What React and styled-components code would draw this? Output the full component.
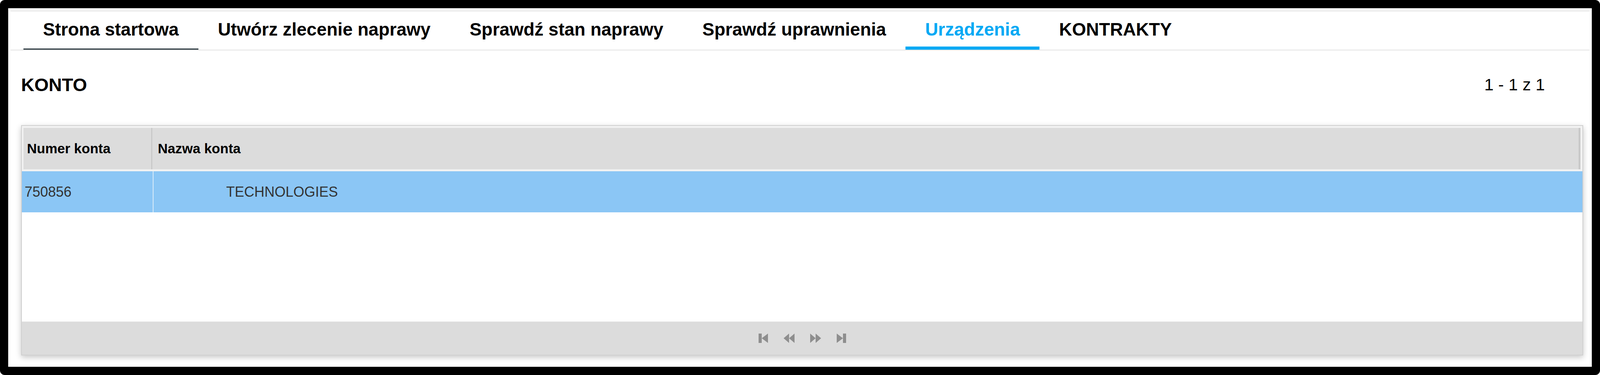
import React from "react";
import styled, { createGlobalStyle } from "styled-components";

const GlobalStyle = createGlobalStyle`
  html, body {
    margin: 0;
    padding: 0;
    background: #fff;
    overflow: hidden;
  }
  body {
    font-family: "Liberation Sans", Arial, sans-serif;
  }
`;

const tabs = [
  { label: "Strona startowa", mark: "hover" },
  { label: "Utwórz zlecenie naprawy" },
  { label: "Sprawdź stan naprawy" },
  { label: "Sprawdź uprawnienia" },
  { label: "Urządzenia", mark: "active" },
  { label: "KONTRAKTY" },
];

const PagerIcon = ({ kind }) => {
  const w = kind === "prev" || kind === "next" ? 28 : 24;
  return (
    <IconSvg width={w} height="24" viewBox={`0 0 ${w} 24`}>
      {kind === "first" && (
        <>
          <rect x="0" y="0" width="8" height="24" />
          <polygon points="24,0 8,12 24,24" />
        </>
      )}
      {kind === "prev" && (
        <>
          <polygon points="14,0 0,12 14,24" />
          <polygon points="28,0 14,12 28,24" />
        </>
      )}
      {kind === "next" && (
        <>
          <polygon points="0,0 14,12 0,24" />
          <polygon points="14,0 28,12 14,24" />
        </>
      )}
      {kind === "last" && (
        <>
          <polygon points="0,0 16,12 0,24" />
          <rect x="16" y="0" width="8" height="24" />
        </>
      )}
    </IconSvg>
  );
};

const App = () => {
  return (
    <>
      <GlobalStyle />
      <Frame>
        <TabBar>
          {tabs.map((t) => (
            <Tab key={t.label} $mark={t.mark}>
              {t.label}
            </Tab>
          ))}
        </TabBar>
        <Content>
          <TitleRow>
            <Title>KONTO</Title>
            <PageInfo>1 - 1 z 1</PageInfo>
          </TitleRow>
          <Grid>
            <HeaderWrap>
              <HeaderRow>
                <HeaderCell $width="330px" $border="3px">
                  Numer konta
                </HeaderCell>
                <HeaderCell $pad="14px" $border="5px">
                  Nazwa konta
                </HeaderCell>
              </HeaderRow>
            </HeaderWrap>
            <DataRow>
              <DataCell $width="337px">750856</DataCell>
              <DataCell $pad="14px">
                <Company>TECHNOLOGIES</Company>
              </DataCell>
            </DataRow>
            <Filler />
            <Pager>
              <PagerIcon kind="first" />
              <PagerIcon kind="prev" />
              <PagerIcon kind="next" />
              <PagerIcon kind="last" />
            </Pager>
          </Grid>
        </Content>
      </Frame>
    </>
  );
};

const Frame = styled.div`
  width: 100%;
  height: 100vh;
  box-sizing: border-box;
  border: 21px solid #000;
  border-radius: 12px;
  padding: 6px;
  background: #fff;
  display: flex;
  flex-direction: column;
`;

const TabBar = styled.div`
  display: flex;
  border-top: 2px solid #e3e3e3;
  border-bottom: 2px solid #e3e3e3;
  padding-left: 33px;
`;

const Tab = styled.div`
  height: 98px;
  box-sizing: border-box;
  padding: 0 50px 7px;
  display: flex;
  align-items: center;
  font-size: 46px;
  font-weight: bold;
  white-space: nowrap;
  color: ${(p) => (p.$mark === "active" ? "#03a9f4" : "#000")};
  box-shadow: ${(p) =>
    p.$mark === "active"
      ? "inset 0 -8px 0 #03a9f4"
      : p.$mark === "hover"
      ? "inset 0 -3px 0 #2c3940"
      : "none"};
  cursor: pointer;
`;

const Content = styled.div`
  flex: 1;
  display: flex;
  flex-direction: column;
  padding: 0 16px 0 27px;
`;

const TitleRow = styled.div`
  display: flex;
  justify-content: space-between;
  align-items: center;
  height: 54px;
  margin-top: 60px;
  padding-right: 98px;
`;

const Title = styled.h2`
  margin: 0;
  font-size: 47px;
  font-weight: bold;
  color: #000;
`;

const PageInfo = styled.span`
  font-size: 43px;
  color: #000;
  white-space: nowrap;
`;

const Grid = styled.div`
  margin-top: 77px;
  height: 589px;
  box-sizing: border-box;
  border: 2px solid #d0d0d0;
  background: #fff;
  display: flex;
  flex-direction: column;
  box-shadow: 0 5px 14px rgba(0, 0, 0, 0.22);
`;

const HeaderWrap = styled.div`
  padding: 5px 5px 5px 4px;
  background: #f2f2f2;
`;

const HeaderRow = styled.div`
  display: flex;
  height: 106px;
  background: #dcdcdc;
`;

const HeaderCell = styled.div`
  box-sizing: border-box;
  width: ${(p) => p.$width || "auto"};
  flex: ${(p) => (p.$width ? "none" : "1")};
  padding-left: ${(p) => p.$pad || "9px"};
  border-right: ${(p) => p.$border} solid #c9c9c9;
  display: flex;
  align-items: center;
  font-size: 35px;
  font-weight: bold;
  color: #000;
`;

const DataRow = styled.div`
  display: flex;
  height: 105px;
  background: #8bc6f5;
`;

const DataCell = styled.div`
  box-sizing: border-box;
  width: ${(p) => p.$width || "auto"};
  flex: ${(p) => (p.$width ? "none" : "1")};
  padding-left: ${(p) => p.$pad || "7px"};
  border-right: ${(p) => (p.$width ? "2px solid #dcecf9" : "none")};
  display: flex;
  align-items: center;
  font-size: 36px;
  color: #333;
`;

const Company = styled.span`
  margin-left: 172px;
`;

const Filler = styled.div`
  flex: 1;
`;

const Pager = styled.div`
  height: 85px;
  box-sizing: border-box;
  background: #dcdcdc;
  border-top: 1px solid #e8e8e8;
  display: flex;
  justify-content: center;
  align-items: center;
  gap: 40px;
`;

const IconSvg = styled.svg`
  fill: #8e8e8e;
  display: block;
`;

export default App;
